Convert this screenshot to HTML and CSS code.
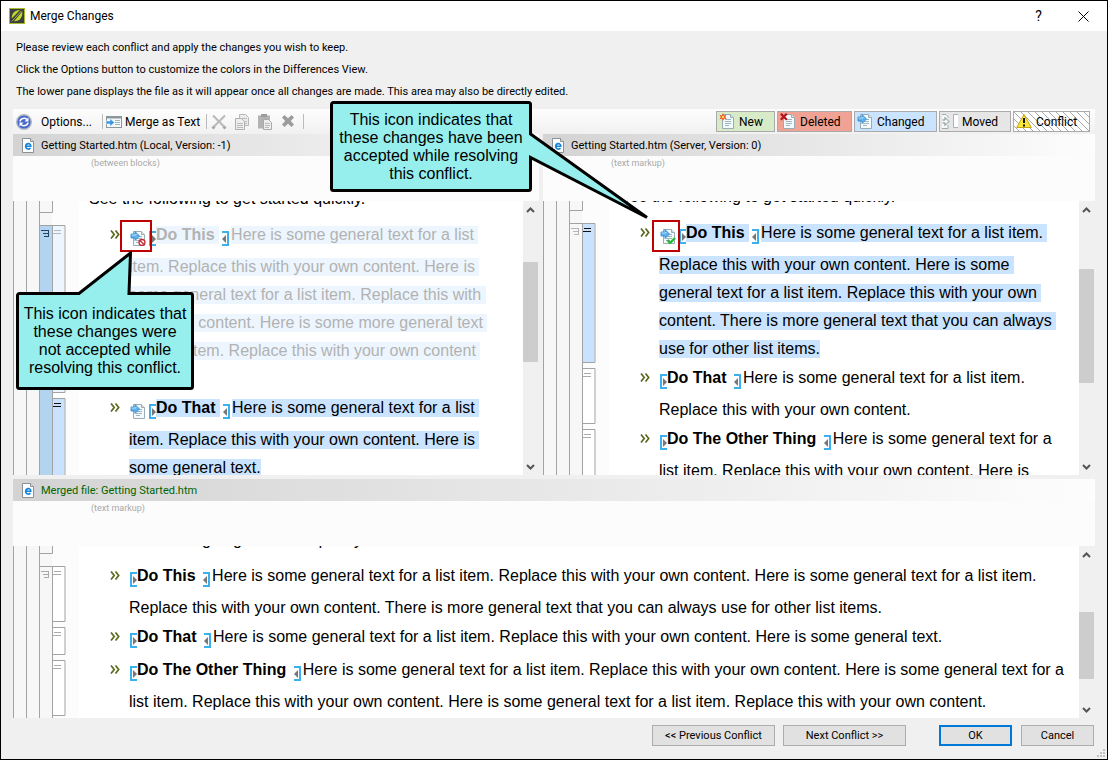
FILE: index.html
```html
<!DOCTYPE html>
<html lang="en">
<head>
<meta charset="utf-8">
<title>Merge Changes</title>
<link rel="stylesheet" href="styles.css">
</head>
<body>
<svg class="defs" aria-hidden="true">
  <defs>
    <symbol id="page" viewBox="0 0 16 16">
      <path d="M3.5 1.5h8l3 3v11h-11z" fill="#f4fafc" stroke="#9aacb4"/>
      <path d="M11.5 1.5v3h3" fill="#dfe9ee" stroke="#9aacb4"/>
      <path d="M6 6.5h6M6 8.5h6M6 10.5h6M6 12.5h4" stroke="#9db7c2"/>
    </symbol>
    <symbol id="changed" viewBox="0 0 16 16">
      <use href="#page"/>
      <path d="M1 4h4V1.500L9.500 6 5 10.500V8H1z" fill="#5fb2ee" stroke="#2f80c4" stroke-width=".8"/>
      <path d="M1.500 5h4.500V4" fill="none" stroke="#b4dffb"/>
    </symbol>
    <symbol id="html" viewBox="0 0 12 15">
      <path d="M.5.5h8l3 3v11H.5z" fill="#fbfdff" stroke="#8d9094"/>
      <path d="M8.500.5v3h3" fill="#ddd" stroke="#8d9094"/>
      <path d="M3.800 8.200h5c0-3.600-4.900-3.300-5.100.1 0 3.300 3.600 3.300 4.800 1.800" fill="none" stroke="#1583d8" stroke-width="1.600"/>
    </symbol>
    <symbol id="open" viewBox="0 0 7 15">
      <path d="M7 1H1v13h6" fill="none" stroke="#3cb0ec" stroke-width="2"/>
      <path d="M3 4v8l4-4z" fill="#777"/>
    </symbol>
    <symbol id="close" viewBox="0 0 7 15">
      <path d="M0 1h6v13H0" fill="none" stroke="#3cb0ec" stroke-width="2"/>
      <path d="M4 4v8L0 8z" fill="#777"/>
    </symbol>
    <symbol id="bullet" viewBox="0 0 10 9">
      <path d="M1 .5l3.200 4L1 8.500M5.500.5l3.200 4-3.200 4" fill="none" stroke="#5a6b1e" stroke-width="1.700"/>
    </symbol>
    <symbol id="up" viewBox="0 0 9 6"><path d="M1 5l3.500-3.500L8 5" fill="none" stroke="#555" stroke-width="2"/></symbol>
    <symbol id="down" viewBox="0 0 9 6"><path d="M1 1l3.500 3.500L8 1" fill="none" stroke="#555" stroke-width="2"/></symbol>
    <symbol id="ol" viewBox="0 0 8 7"><path d="M0 .5h8M2 3.500h6M3 6.500h5M7.500 0v7" fill="none" stroke="currentColor"/></symbol>
    <symbol id="li" viewBox="0 0 8 4"><path d="M1 .5h7M0 3.500h8" stroke="currentColor"/></symbol>
    <pattern id="hatch" width="7" height="7" patternUnits="userSpaceOnUse"><path d="M-1-1l9 9" stroke="#aaa"/></pattern>
  </defs>
</svg>

<div class="window">
  <header class="titlebar">
    <svg class="logo" viewBox="0 0 16 16" aria-hidden="true">
      <rect x=".5" y=".5" width="15" height="15" fill="#3c3f42" stroke="#a9bb28"/>
      <path d="M11 2C5.500 2.500 2.500 5.500 2.800 10.500zM13.200 3.500C14 9.500 10.500 13.500 5 13.200z" fill="#c3d82c"/>
      <path d="M2.800 13.500L12.500 2.800" stroke="#c3d82c" stroke-width=".8"/>
    </svg>
    <h1 class="title">Merge Changes</h1>
    <button class="sysbtn" aria-label="Help">?</button>
    <button class="sysbtn" aria-label="Close"><svg width="11" height="11" viewBox="0 0 11 11"><path d="M.5.5l10 10M10.500.5l-10 10" stroke="#000"/></svg></button>
  </header>

  <div class="notes">
    <p>Please review each conflict and apply the changes you wish to keep.</p>
    <p>Click the Options button to customize the colors in the Differences View.</p>
    <p>The lower pane displays the file as it will appear once all changes are made. This area may also be directly edited.</p>
  </div>

  <main class="workspace">
    <div class="toolbar">
      <button class="tool options">
        <svg width="16" height="16" viewBox="0 0 16 16" aria-hidden="true"><circle cx="8" cy="8" r="7.300" fill="#4668c8" stroke="#b5b9c4" stroke-width="1.400"/><path d="M4 7.500C4.500 4 9 3.500 11 5.500M12 8.500c-.5 3.500-5 4-7 2" fill="none" stroke="#fff" stroke-width="1.600"/><path d="M12.500 3.500v4h-4zM3.500 12.500v-4h4z" fill="#fff"/></svg>
        Options...
      </button>
      <span class="sep"></span>
      <button class="tool merge">
        <svg width="16" height="14" viewBox="0 0 16 14" aria-hidden="true"><rect x=".5" y="1.500" width="15" height="11" fill="#f5f7f8" stroke="#8c979c"/><path d="M0 2.500h16" stroke="#8c979c" stroke-width="2"/><path d="M9 5.500h5M9 7.500h5M9 9.500h5" stroke="#98b4c0"/><path d="M0 6h4V3.500L8.500 7.500 4 11.500V9H0z" fill="#3c96e0" stroke="#fff" stroke-width=".5"/></svg>
        Merge as Text
      </button>
      <span class="sep"></span>
      <button class="tool icon" aria-label="Cut" disabled><svg width="16" height="16" viewBox="0 0 16 16"><path d="M2 1.500l11 11M14 1.500l-11 11" stroke="#b8b8b8" stroke-width="2"/><path d="M1.500 12.500l2 2M14.500 12.500l-2 2" stroke="#a8a8a8" stroke-width="3"/></svg></button>
      <button class="tool icon" aria-label="Copy" disabled><svg width="16" height="16" viewBox="0 0 16 16"><path d="M5.500.5h6l3 3v8h-9z" fill="#ececec" stroke="#b8b8b8"/><path d="M1.500 4.500h6l3 3v8h-9z" fill="#eee" stroke="#b0b0b0"/><path d="M3 9.500h6M3 11.500h6M3 13.500h6M8 4.500h5M11 7.500h2M11 9.500h2" stroke="#bbb"/></svg></button>
      <button class="tool icon" aria-label="Paste" disabled><svg width="16" height="16" viewBox="0 0 16 16"><path d="M1 1.500h12v13H1z" fill="#b3b3b3"/><path d="M4 0h6v3H4z" fill="#9c9c9c"/><path d="M6.500 5.500h5l3 3v7h-8z" fill="#eee" stroke="#aaa"/><path d="M8 9.500h5M8 11.500h5M8 13.500h4" stroke="#bbb"/></svg></button>
      <button class="tool icon last" aria-label="Delete" disabled><svg width="16" height="16" viewBox="0 0 16 16"><path d="M2 3.500L4.500 1 8 4.200 11.500 1 14 3.500 10.800 7 14 10.500 11.500 13 8 9.800 4.500 13 2 10.500 5.200 7z" fill="#9c9c9c"/></svg></button>
      <span class="sep"></span>
      <span class="legend">
        <button class="key new"><svg width="16" height="16" aria-hidden="true"><use href="#page"/><path d="M4 0l1 2.500 2.500-.8L6.300 4l1.400 2-2.500-.2L4 8 3 5.800.5 6.300 1.800 4 .4 1.800l2.500.6z" fill="#ee5a24"/><circle cx="4" cy="4" r="1.200" fill="#ffd84a"/></svg>New</button>
        <button class="key deleted"><svg width="16" height="16" aria-hidden="true"><use href="#page"/><path d="M.8.8l6 6M6.800.8l-6 6" stroke="#b5121b" stroke-width="2.200"/></svg>Deleted</button>
        <button class="key changed"><svg width="16" height="16" aria-hidden="true"><use href="#changed"/></svg>Changed</button>
        <button class="key moved"><svg width="16" height="16" viewBox="0 0 16 16" aria-hidden="true"><path d="M0 1h4l2 2v12H0z" fill="#f4f8f9"/><path d="M0 1.500h4l2 2V5M6 12v3.500H0" fill="none" stroke="#9aacb4"/><path d="M.5 7h2.500V4.500l4 4-4 4V10H.5" fill="#f4f4f4" stroke="#7d8d8d"/><path d="M16 1.500h-5v13h5z" fill="#fff"/><path d="M16 1.500h-4.500v13H16" fill="none" stroke="#a4b3ba"/></svg>Moved</button>
        <button class="key conflict"><svg class="hatch" aria-hidden="true"><rect width="100%" height="100%" fill="url(#hatch)"/></svg><svg width="16" height="16" viewBox="0 0 16 16" aria-hidden="true"><path d="M8 1.500l7.300 13H.7z" fill="#fbe63a" stroke="#c2a416" stroke-linejoin="round"/><path d="M8 5v5M8 11.500v2" stroke="#111" stroke-width="2"/></svg><span>Conflict</span></button>
      </span>
    </div>

    <div class="compare">
      <section class="pane local" aria-label="Local version">
        <h2 class="pane-head"><svg width="12" height="15" aria-hidden="true"><use href="#html"/></svg>Getting Started.htm (Local, Version: -1)</h2>
        <div class="crumb">(between blocks)</div>
        <div class="view">
          <svg class="gutter" aria-hidden="true">
            <path d="M0 0h39v400H0z" fill="#f7f7f7"/>
            <path d="M26.500 24.500h13V400h-13z" fill="#b2d4f0"/>
            <path d="M39.500 24.500h12v167h-12z" fill="#edf5ff"/>
            <path d="M39.500 197.500h12V400h-12z" fill="#c9e2ff"/>
            <path d="M.5 0v400M13.500 0v400M26.500 0v400M26.500 11.500h13V0M39.500 400V24.500M26.500 24.500h25.500v167H39.500M39.500 400V197.500h12.500V400" fill="none" stroke="#a3a3a3"/>
            <use href="#ol" x="28" y="29" width="8" height="7" color="#24435e"/>
            <use href="#li" x="40" y="29" width="8" height="4" color="#b4bac4"/>
            <use href="#li" x="40" y="202" width="8" height="4" color="#111"/>
          </svg>
          <div class="doc">
            <p class="lead">See the following to get started quickly.</p>
            <ul class="items">
              <li class="item dim"><svg class="bullet"><use href="#bullet"/></svg>
                <div class="lines">
                  <div class="line"><svg class="state"><use href="#changed"/><circle cx="12" cy="12.500" r="3" fill="#fff" stroke="#c62a32" stroke-width="1.300"/><path d="M9.800 10.500l4.400 4" stroke="#c62a32" stroke-width="1.300"/></svg><svg class="tag start"><use href="#open"/></svg><b class="mark">Do This </b><svg class="tag end"><use href="#close"/></svg><span class="mark">Here is some general text for a list </span></div>
                  <div class="line"><span class="mark">item. Replace this with your own content. Here is </span></div>
                  <div class="line"><span class="mark">some general text for a list item. Replace this with </span></div>
                  <div class="line"><span class="mark">your own content. Here is some more general text </span></div>
                  <div class="line"><span class="mark">for a list item. Replace this with your own content </span></div>
                  <div class="line"><span class="mark">like here.</span></div>
                </div></li>
              <li class="item hot"><svg class="bullet"><use href="#bullet"/></svg>
                <div class="lines">
                  <div class="line"><svg class="state"><use href="#changed"/></svg><svg class="tag start"><use href="#open"/></svg><b class="mark">Do That </b><svg class="tag end"><use href="#close"/></svg><span class="mark">Here is some general text for a list </span></div>
                  <div class="line"><span class="mark">item. Replace this with your own content. Here is </span></div>
                  <div class="line"><span class="mark">some general text.</span></div>
                </div></li>
            </ul>
          </div>
          <div class="scroll"><svg class="arrow"><use href="#up"/></svg><span class="lift"></span><span class="thumb"></span><span class="rest"></span><svg class="arrow"><use href="#down"/></svg></div>
        </div>
      </section>

      <section class="pane server" aria-label="Server version">
        <h2 class="pane-head"><svg width="12" height="15" aria-hidden="true"><use href="#html"/></svg>Getting Started.htm (Server, Version: 0)</h2>
        <div class="crumb">(text markup)</div>
        <div class="view">
          <svg class="gutter" aria-hidden="true">
            <path d="M0 0h39v400H0z" fill="#f7f7f7"/>
            <path d="M39.500 22.500h12v139h-12z" fill="#c9e2ff"/>
            <path d="M39.500 167.500h12v56h-12zM39.500 228.500h12V400h-12z" fill="#fff"/>
            <path d="M.5 0v400M13.500 0v400M26.500 0v400M26.500 9.500h13V0M39.500 400V22.500M26.500 22.500h25.500v139H39.500M39.500 167.500h12.500v55H39.500M39.500 228.500h12.500V400" fill="none" stroke="#a3a3a3"/>
            <use href="#ol" x="28" y="27" width="8" height="7" color="#b5b5b5"/>
            <use href="#li" x="40" y="27" width="8" height="4" color="#111"/>
            <use href="#li" x="40" y="172" width="8" height="4" color="#aaa"/>
            <use href="#li" x="40" y="233" width="8" height="4" color="#aaa"/>
          </svg>
          <div class="doc">
            <p class="lead">See the following to get started quickly.</p>
            <ul class="items">
              <li class="item hot"><svg class="bullet"><use href="#bullet"/></svg>
                <div class="lines">
                  <div class="line"><svg class="state"><use href="#changed"/><path d="M7.500 12l2.500 3 5-5" fill="none" stroke="#27b53a" stroke-width="2.400"/></svg><svg class="tag start"><use href="#open"/></svg><b class="mark">Do This </b><svg class="tag end"><use href="#close"/></svg><span class="mark">Here is some general text for a list item. </span></div>
                  <div class="line"><span class="mark">Replace this with your own content. Here is some </span></div>
                  <div class="line"><span class="mark">general text for a list item. Replace this with your own </span></div>
                  <div class="line"><span class="mark">content. There is more general text that you can always </span></div>
                  <div class="line"><span class="mark">use for other list items.</span></div>
                </div></li>
              <li class="item"><svg class="bullet"><use href="#bullet"/></svg>
                <div class="lines">
                  <div class="line"><svg class="tag lone"><use href="#open"/></svg><b>Do That </b><svg class="tag end"><use href="#close"/></svg>Here is some general text for a list item.</div>
                  <div class="line">Replace this with your own content.</div>
                </div></li>
              <li class="item"><svg class="bullet"><use href="#bullet"/></svg>
                <div class="lines">
                  <div class="line"><svg class="tag lone"><use href="#open"/></svg><b>Do The Other Thing </b><svg class="tag end"><use href="#close"/></svg>Here is some general text for a</div>
                  <div class="line">list item. Replace this with your own content. Here is</div>
                </div></li>
            </ul>
          </div>
          <div class="scroll"><svg class="arrow"><use href="#up"/></svg><span class="lift"></span><span class="thumb"></span><span class="rest"></span><svg class="arrow"><use href="#down"/></svg></div>
        </div>
      </section>
    </div>

    <section class="pane merged" aria-label="Merged file">
      <h2 class="pane-head"><svg width="12" height="15" aria-hidden="true"><use href="#html"/></svg>Merged file: Getting Started.htm</h2>
      <div class="crumb">(text markup)</div>
      <div class="view">
        <svg class="gutter" aria-hidden="true">
          <path d="M0 0h39v400H0z" fill="#f7f7f7"/>
          <path d="M39.500 20.500h12v55h-12zM39.500 81.500h12v27h-12zM39.500 114.500h12v55h-12z" fill="#fff"/>
          <path d="M.5 0v400M13.500 0v400M26.500 0v400M26.500 7.500h13V0M39.500 400V20.500M26.500 20.500h25.500v55H39.500M39.500 81.500h12.500v27H39.500M39.500 114.500h12.500v55H39.500" fill="none" stroke="#a3a3a3"/>
          <use href="#ol" x="28" y="25" width="8" height="7" color="#aaa"/>
          <use href="#li" x="40" y="25" width="8" height="4" color="#aaa"/>
          <use href="#li" x="40" y="86" width="8" height="4" color="#aaa"/>
          <use href="#li" x="40" y="119" width="8" height="4" color="#aaa"/>
        </svg>
        <div class="doc">
          <p class="lead">See the following to get started quickly.</p>
          <ul class="items">
            <li class="item"><svg class="bullet"><use href="#bullet"/></svg>
              <div class="lines">
                <div class="line"><svg class="tag lone"><use href="#open"/></svg><b>Do This </b><svg class="tag end"><use href="#close"/></svg>Here is some general text for a list item. Replace this with your own content. Here is some general text for a list item.</div>
                <div class="line">Replace this with your own content. There is more general text that you can always use for other list items.</div>
              </div></li>
            <li class="item"><svg class="bullet"><use href="#bullet"/></svg>
              <div class="lines">
                <div class="line"><svg class="tag lone"><use href="#open"/></svg><b>Do That </b><svg class="tag end"><use href="#close"/></svg>Here is some general text for a list item. Replace this with your own content. Here is some general text.</div>
              </div></li>
            <li class="item"><svg class="bullet"><use href="#bullet"/></svg>
              <div class="lines">
                <div class="line"><svg class="tag lone"><use href="#open"/></svg><b>Do The Other Thing </b><svg class="tag end"><use href="#close"/></svg>Here is some general text for a list item. Replace this with your own content. Here is some general text for a</div>
                <div class="line">list item. Replace this with your own content. Here is some general text for a list item. Replace this with your own content.</div>
              </div></li>
          </ul>
        </div>
        <div class="scroll"><svg class="arrow"><use href="#up"/></svg><span class="lift"></span><span class="thumb"></span><span class="rest"></span><svg class="arrow"><use href="#down"/></svg></div>
      </div>
    </section>
  </main>

  <footer class="actions">
    <button class="btn wide">&lt;&lt; Previous Conflict</button>
    <button class="btn wide">Next Conflict &gt;&gt;</button>
    <button class="btn primary">OK</button>
    <button class="btn">Cancel</button>
    <svg class="grip" viewBox="0 0 8 8" aria-hidden="true"><path d="M6 0h2v2H6zM6 3h2v2H6zM3 3h2v2H3zM6 6h2v2H6zM3 6h2v2H3zM0 6h2v2H0z" fill="#bfbfbf"/></svg>
  </footer>

  <span class="ring ring-local"></span>
  <span class="ring ring-server"></span>
  <div class="callout callout-server">
    <svg class="shape" viewBox="0 0 320 120" aria-hidden="true"><path d="M4 1.500h194.500a2 2 0 0 1 2 2V33L317 116.500 200.500 56.500v31a2 2 0 0 1-2 2H3.500a2 2 0 0 1-2-2v-84a2 2 0 0 1 2-2z" fill="#96efec" stroke="#000" stroke-width="3"/></svg>
    <p>This icon indicates that<br>these changes have been<br>accepted while resolving<br>this conflict.</p>
  </div>
  <div class="callout callout-local">
    <svg class="shape" viewBox="0 0 178 140" aria-hidden="true"><path d="M3.500 42.500H63L114.500 2l-1.500 40.500h61.500a2 2 0 0 1 2 2v91a2 2 0 0 1-2 2h-171a2 2 0 0 1-2-2v-91a2 2 0 0 1 2-2z" fill="#96efec" stroke="#000" stroke-width="3"/></svg>
    <p>This icon indicates that<br>these changes were<br>not accepted while<br>resolving this conflict.</p>
  </div>
</div>
</body>
</html>
```

FILE: styles.css
```css
* { box-sizing: border-box; }

body {
  margin: 0;
  background: #f0f0f0;
  color: #000;
  font-family: Roboto, "Liberation Sans", sans-serif;
  font-size: 11px;
}

h1, h2, p, ul { margin: 0; padding: 0; font-weight: 400; list-style: none; }
svg { flex: none; }
button { font: inherit; color: inherit; margin: 0; padding: 0; border: 0; background: none; }
.defs { position: absolute; width: 0; height: 0; }

.window {
  position: relative;
  display: flex;
  flex-direction: column;
  min-height: 100vh;
  border: 1px solid #000;
}

/* Title bar */
.titlebar {
  display: flex;
  align-items: center;
  height: 30px;
  padding: 0 1px 0 8px;
  background: #fff;
}
.logo { width: 16px; height: 16px; margin-right: 5px; }
.title { flex: 1; font-size: 12px; }
.sysbtn { display: flex; align-items: center; justify-content: center; width: 45px; height: 30px; font-size: 14px; }

.notes { padding: 6px 15px; line-height: 22px; }

.workspace { flex: 1; display: flex; flex-direction: column; margin: 0 12px; }

/* Toolbar */
.toolbar {
  display: flex;
  align-items: center;
  height: 25px;
  padding: 0 5px 0 3px;
  background: linear-gradient(#fdfdfd, #f1f1f1);
  font-size: 12px;
}
.tool { display: flex; align-items: center; }
.options { gap: 9px; width: 82px; }
.merge { gap: 3px; width: 96px; }
.icon { width: 16px; margin-right: 7px; }
.icon.last { margin-right: 3px; }
.sep { width: 1px; height: 15px; margin: 0 4px; background: #bbb; }
.options + .sep { margin-right: 3px; }
.legend { display: flex; gap: 2px; margin-left: auto; }
.key {
  position: relative;
  display: flex;
  align-items: center;
  gap: 4px;
  height: 21px;
  padding: 0 2px;
  border: 1px solid #aaa;
}
.key svg { margin-bottom: 2px; }
.new { width: 59px; background: #d7ebc8; }
.deleted { width: 75px; background: #f0a294; }
.changed { width: 83px; background: #cae3ff; }
.moved { width: 72px; background: #e6e6e6; }
.conflict { width: 77px; background: #fff; }
.conflict > * { position: relative; }
.conflict .hatch { position: absolute; inset: 0; width: 100%; height: 100%; margin: 0; }

/* Panes */
.compare { flex: 341 1 0; display: grid; grid-template-columns: 526fr 552fr; gap: 4px; min-height: 0; }
.pane { display: flex; flex-direction: column; min-width: 0; min-height: 0; }
.merged { flex: 239 1 0; margin-top: 4px; }
.pane-head {
  display: flex;
  align-items: center;
  gap: 7px;
  height: 22px;
  padding-left: 9px;
  background: linear-gradient(90deg, #d3d3d3, #fdfdfd);
  font-size: 11px;
}
.merged .pane-head { color: #006400; }
.crumb { height: 45px; padding: 1px 0 0 78px; background: #fcfcfc; color: #a8a8a8; font-size: 9px; line-height: 12px; }
.server .crumb { padding-left: 68px; }
.view { flex: 1 1 0; display: flex; min-height: 0; overflow: hidden; background: #fff; }
.gutter { width: 66px; height: 100%; background: #fcfcfc; }

/* Document text */
.doc { flex: 1; min-width: 0; height: 0; font: 16px/28px "Liberation Sans", Arial, sans-serif; }
.lead { padding-left: 10px; margin-bottom: 8px; }
.local .lead { margin-top: -16px; }
.server .lead { margin-top: -18px; }
.merged .lead { margin-top: -20px; }
.item { display: flex; padding-left: 31px; margin-bottom: 1px; }
.bullet { width: 10px; height: 9px; margin: 9px 9px 0 0; }
.line { height: 28px; white-space: pre; }
.line:first-child { height: 32px; }
.mark { padding-bottom: 1px; }
.dim { color: #b2b2b2; }
.dim .mark { background: #edf6fe; }
.hot .mark { background: #cae3ff; }
.state { width: 16px; height: 16px; margin: 0 3px 0 1px; vertical-align: -6px; }
.tag { width: 7px; height: 15px; vertical-align: -6px; }
.tag.lone { margin-left: 1px; }
.tag.end { margin: 0 2px 0 3px; }

/* Scroll bars */
.scroll {
  display: flex;
  flex: none;
  flex-direction: column;
  align-items: center;
  width: 16px;
  padding: 6px 1px 5px 0;
  background: #f0f0f0;
}
.arrow { width: 9px; height: 6px; }
.thumb { width: 15px; background: #cdcdcd; }
.local .lift { flex: 49; }
.local .thumb { flex: 100; }
.local .rest { flex: 102; }
.server .lift { flex: 56; }
.server .thumb { flex: 114; }
.server .rest { flex: 81; }
.merged .lift { flex: 54; }
.merged .thumb { flex: 67; }
.merged .rest { flex: 28; }

/* Footer */
.actions { position: relative; display: flex; justify-content: flex-end; padding: 7px 13px 13px; }
.btn { width: 73px; height: 21px; margin-left: 9px; border: 1px solid #adadad; background: #e1e1e1; }
.btn.wide { width: 123px; margin-left: 8px; }
.btn.primary { margin-left: 33px; border: 2px solid #0078d7; }
.grip { position: absolute; right: 2px; bottom: 2px; width: 8px; height: 8px; }

/* Annotations */
.ring { position: absolute; width: 32px; height: 32px; border: 2px solid #c00000; }
.ring-local { left: 119px; top: 219px; }
.ring-server { left: 651px; top: 219px; width: 28px; }
.callout { position: absolute; font: 16px/18px "Liberation Sans", Arial, sans-serif; text-align: center; }
.callout p { position: relative; }
.shape { position: absolute; left: 0; top: 0; }
.callout-server { left: 329px; top: 100px; width: 202px; padding-top: 10px; }
.callout-server .shape { width: 320px; height: 120px; }
.callout-local { left: 15px; top: 250px; width: 178px; padding-top: 54px; }
.callout-local .shape { width: 178px; height: 140px; }
```
